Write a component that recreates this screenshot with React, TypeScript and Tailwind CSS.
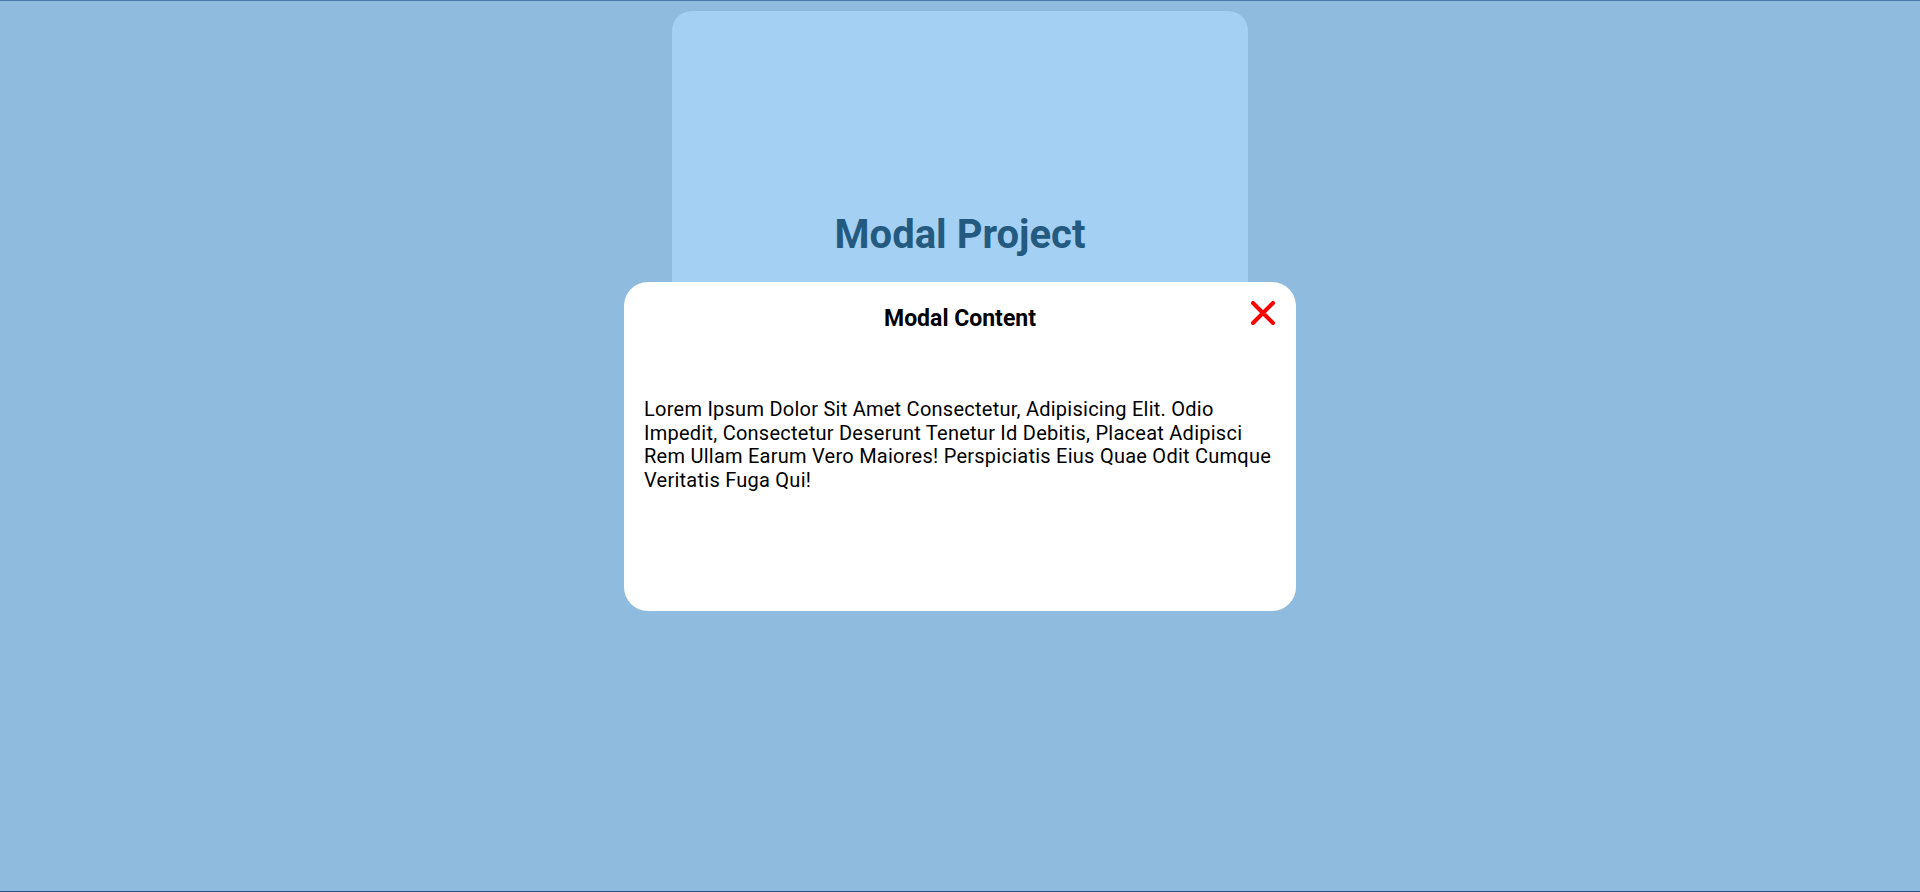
export default function App() {
  return (
    <div className="relative h-[892px] w-full overflow-hidden border-y border-t-[#4a78a8] border-b-[#2a5580] bg-[#8ebbde] font-['Roboto',sans-serif]">
      <div className="flex justify-center pt-[10px]">
        <div className="h-[340px] w-[576px] rounded-[20px] bg-[#a4d1f3] pt-[200px]">
          <h1 className="text-center text-[40px] font-bold leading-[48px] text-[#245a80]">
            Modal Project
          </h1>
        </div>
      </div>

      <div className="absolute inset-0 flex justify-center pt-[281px]">
        <div className="relative h-[329px] w-[672px] rounded-[24px] bg-white px-5 pt-[23px]">
          <h2 className="text-center text-[23px] font-bold leading-[28px] text-black">
            Modal Content
          </h2>
          <button className="absolute right-[20px] top-[17px] flex h-[27px] w-[27px] items-center justify-center">
            <svg width="26" height="24" viewBox="0 0 26 24">
              <path d="M3 2 L23 22 M23 2 L3 22" stroke="#ff0000" strokeWidth="4" strokeLinecap="round" />
            </svg>
          </button>
          <p className="mt-[65px] text-[20px] font-normal capitalize leading-[23.5px] tracking-[0.25px] text-black">
            Lorem ipsum dolor sit amet consectetur, adipisicing elit. Odio impedit, consectetur deserunt tenetur id debitis, placeat adipisci rem ullam earum vero maiores! Perspiciatis eius quae odit cumque veritatis fuga qui!
          </p>
        </div>
      </div>
    </div>
  )
}
